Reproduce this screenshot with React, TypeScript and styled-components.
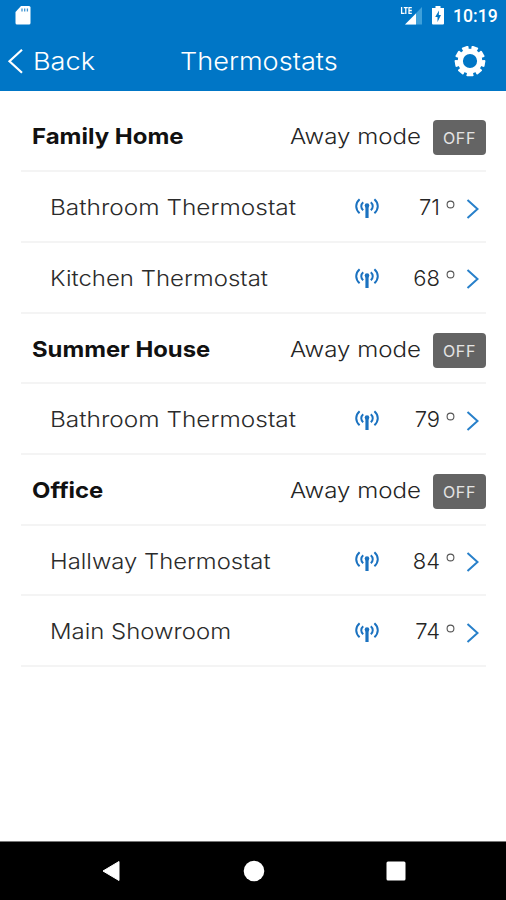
import React from "react";
import styled, { createGlobalStyle } from "styled-components";

const GlobalStyle = createGlobalStyle`
  * { box-sizing: border-box; }
  body { margin: 0; background: #fff; }
`;

const Screen = styled.div`
  width: 506px;
  height: 900px;
  display: flex;
  flex-direction: column;
  background: #fff;
  color: #252525;
  font-family: Inter, "Open Sans", sans-serif;
  overflow: hidden;
`;

const Header = styled.header`
  height: 91px;
  flex: none;
  background: #0076c6;
  color: #fff;
`;

const StatusBar = styled.div`
  height: 32px;
  padding: 0 9px 2px 15px;
  display: flex;
  align-items: center;
  justify-content: space-between;
`;

const StatusIcons = styled.div`
  display: flex;
  align-items: center;
  gap: 9px;
`;

const Clock = styled.span`
  width: 44px;
  padding-top: 2px;
  font: 500 17.6px/30px Roboto, sans-serif;
  white-space: nowrap;
`;

const NavBar = styled.nav`
  height: 59px;
  padding: 0 20px 0 7px;
  display: grid;
  grid-template-columns: 173px 1fr 32px;
  align-items: center;
`;

const BackButton = styled.button`
  display: flex;
  align-items: center;
  gap: 9px;
  padding: 0;
  border: 0;
  background: none;
  color: inherit;
  font: inherit;
`;

const WideText = styled.span<{ $stretch: number }>`
  display: inline-block;
  transform: scaleX(${(p) => p.$stretch});
  transform-origin: left center;
  white-space: nowrap;
`;

const NavText = styled(WideText)`
  font-size: 24px;
  font-weight: 300;
  line-height: 30px;
`;

const List = styled.main`
  flex: 1;
  padding: 10.6px 20px 0 21px;
`;

const Row = styled.div<{ $child?: boolean }>`
  height: 70.7px;
  padding: 1px 0 0 ${(p) => (p.$child ? 28.5 : 10.5)}px;
  display: flex;
  align-items: center;
  border-bottom: 2px solid #f4f4f4;
`;

const Label = styled(WideText)<{ $bold?: boolean }>`
  flex: 1;
  color: ${(p) => (p.$bold ? "#111" : "#2b2b2b")};
  font-size: 22px;
  font-weight: ${(p) => (p.$bold ? 700 : 300)};
  line-height: 28px;
`;

const AwayLabel = styled(WideText)`
  flex: none;
  width: 143px;
  font-size: 22px;
  font-weight: 300;
  line-height: 28px;
`;

const Toggle = styled.button`
  width: 53px;
  height: 35px;
  margin-top: 3px;
  padding: 1px 0 0;
  border: 0;
  border-radius: 4px;
  background: #646464;
  color: #e4e4e4;
  font: 400 16px/34px Inter, sans-serif;
  letter-spacing: 0.7px;
`;

const Antenna = styled.svg`
  flex: none;
  margin: 1px -1px 0 1px;
`;

const Reading = styled.span`
  width: 62px;
  text-align: right;
  font-size: 22px;
  font-weight: 300;
  line-height: 28px;
  white-space: nowrap;
`;

const Degree = styled.svg`
  margin: -6px 11px 0 6px;
`;

const Chevron = styled.svg`
  margin: 3px 6px 0 0;
`;

const BottomBar = styled.footer`
  height: 59px;
  flex: none;
  padding: 0 100px 0 101px;
  display: flex;
  align-items: center;
  justify-content: space-between;
  background: #000;
  border-top: 1px solid #777;
`;

const toothAngles = Array.from({ length: 9 }, (_, i) => i * 40 + 20);

const GearIcon = () => (
  <svg width="32" height="32" viewBox="-16 -15 32 32">
    <circle r="9.7" fill="none" stroke="#fff" strokeWidth="5.2" />
    {toothAngles.map((a) => (
      <path key={a} transform={`rotate(${a})`} d="M-2.6-10-3.5-14.3-2.9-15.2H2.9L3.5-14.3 2.6-10Z" fill="#fff" />
    ))}
  </svg>
);

const AntennaIcon = () => (
  <Antenna width="24" height="20" viewBox="0 0 24 20" fill="none" stroke="#1b72c0" strokeWidth="2">
    <path d="M4.600 1.200C.1 5.200.1 11.300 4.600 15.300M19.400 1.200c4.500 4 4.500 10.100 0 14.100" />
    <path d="M8.200 4.200c-2.600 2.300-2.600 5.700 0 8M15.800 4.200c2.600 2.300 2.600 5.700 0 8" />
    <circle cx="12" cy="7.6" r="2.3" fill="#1b72c0" stroke="none" />
    <path d="M12 8v12" strokeWidth="3.2" />
  </Antenna>
);

type Thermostat = { name: string; value: number; stretch: number };
type Site = { name: string; stretch: number; thermostats: Thermostat[] };

const sites: Site[] = [
  {
    name: "Family Home",
    stretch: 1.09,
    thermostats: [
      { name: "Bathroom Thermostat", value: 71, stretch: 1.11 },
      { name: "Kitchen Thermostat", value: 68, stretch: 1.09 },
    ],
  },
  {
    name: "Summer House",
    stretch: 1.083,
    thermostats: [{ name: "Bathroom Thermostat", value: 79, stretch: 1.11 }],
  },
  {
    name: "Office",
    stretch: 1.085,
    thermostats: [
      { name: "Hallway Thermostat", value: 84, stretch: 1.084 },
      { name: "Main Showroom", value: 74, stretch: 1.088 },
    ],
  },
];

const SiteHeading = ({ site }: { site: Site }) => (
  <Row>
    <Label $bold $stretch={site.stretch}>{site.name}</Label>
    <AwayLabel $stretch={1.095}>Away mode</AwayLabel>
    <Toggle>OFF</Toggle>
  </Row>
);

const ThermostatRow = ({ item }: { item: Thermostat }) => (
  <Row $child>
    <Label $stretch={item.stretch}>{item.name}</Label>
    <AntennaIcon />
    <Reading>{item.value}</Reading>
    <Degree width="9" height="9" viewBox="0 0 9 9">
      <circle cx="4.5" cy="4.5" r="3.4" fill="none" stroke="#555" strokeWidth="1.1" />
    </Degree>
    <Chevron width="14" height="20" viewBox="0 0 14 20">
      <path d="M1.500 1 11.500 10 1.500 19" fill="none" stroke="#2880ca" strokeWidth="2" />
    </Chevron>
  </Row>
);

export default function App() {
  return (
    <Screen>
      <GlobalStyle />
      <Header>
        <StatusBar>
          <svg width="16" height="19" viewBox="0 0 16 19">
            <path d="M6 0h8q1.500 0 1.500 1.500v15.500q0 1.500-1.500 1.500H2Q.5 18.500.5 17V6Z" fill="#fff" />
            <path d="M7 2.500v3M9.700 2.500v3M12.400 2.500v3" stroke="#3f94d2" strokeWidth="1.300" />
          </svg>
          <StatusIcons>
            <svg width="23" height="19" viewBox="0 0 23 19">
              <path d="M5 18.500 22 1v17.500Z" fill="#3fa0da" />
              <path d="M5 18.500 16 7.500v11Z" fill="#fff" />
              <path d="M1.600 1v6.400h3M3.800 1.600h4M5.800 1.600V8M11.800 1.600H9V7.400h2.800M9 4.500h2.800" fill="none" stroke="#fff" strokeWidth="1.300" />
            </svg>
            <svg width="12" height="19" viewBox="0 0 12 19">
              <path d="M3.500 0h5v2H12v15.500q0 1-1 1H1q-1 0-1-1V2h3.500Z" fill="#fff" />
              <path d="M7 4.500 3.200 11h2.300v5L9 9H6.800Z" fill="#0076c6" />
            </svg>
            <Clock>10:19</Clock>
          </StatusIcons>
        </StatusBar>
        <NavBar>
          <BackButton>
            <svg width="17" height="26" viewBox="0 0 17 26">
              <path d="M15 .8 2.500 12.300 15 23.800" fill="none" stroke="#fff" strokeWidth="2.200" />
            </svg>
            <NavText $stretch={1.13}>Back</NavText>
          </BackButton>
          <NavText $stretch={1.13}>Thermostats</NavText>
          <GearIcon />
        </NavBar>
      </Header>
      <List>
        {sites.map((site) => (
          <React.Fragment key={site.name}>
            <SiteHeading site={site} />
            {site.thermostats.map((item) => (
              <ThermostatRow key={item.name} item={item} />
            ))}
          </React.Fragment>
        ))}
      </List>
      <BottomBar>
        <svg width="20" height="22" viewBox="0 0 20 22">
          <path d="M18 1.500V20.500L2 11Z" fill="#fff" stroke="#fff" strokeLinejoin="round" />
        </svg>
        <svg width="22" height="22" viewBox="0 0 22 22">
          <circle cx="11" cy="11" r="10.300" fill="#fff" />
        </svg>
        <svg width="20" height="20" viewBox="0 0 20 20">
          <rect x=".5" y=".5" width="19" height="19" rx="1.500" fill="#fff" />
        </svg>
      </BottomBar>
    </Screen>
  );
}
